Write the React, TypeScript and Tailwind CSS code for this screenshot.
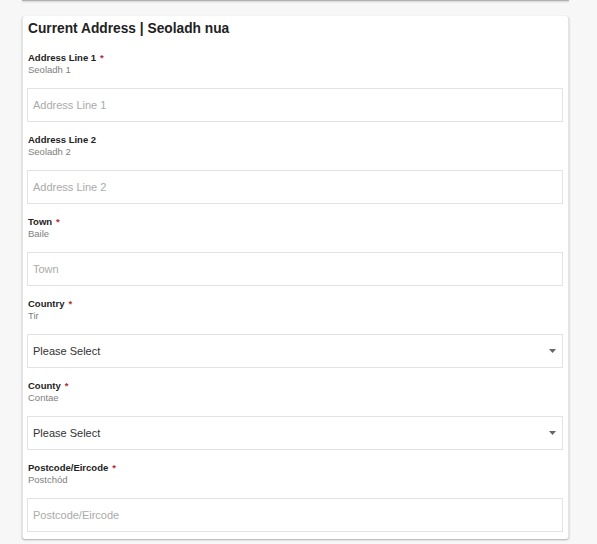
const fields = [
  { label: "Address Line 1", sub: "Seoladh 1", required: true, placeholder: "Address Line 1" },
  { label: "Address Line 2", sub: "Seoladh 2", required: false, placeholder: "Address Line 2" },
  { label: "Town", sub: "Baile", required: true, placeholder: "Town" },
  { label: "Country", sub: "Tir", required: true, select: true },
  { label: "County", sub: "Contae", required: true, select: true },
  { label: "Postcode/Eircode", sub: "Postchód", required: true, placeholder: "Postcode/Eircode" },
];

function Field({ f }: { f: (typeof fields)[number] }) {
  return (
    <div className="pt-[11px]">
      <div className="h-[12px] pl-[1px] text-[9.5px] leading-[12px] font-bold text-[#222]">
        {f.label}
        {f.required && <span className="ml-[4px] text-[#b03030]">*</span>}
      </div>
      <div className="h-[12px] pl-[1px] text-[9.5px] leading-[12px] text-[#808080]">{f.sub}</div>
      <div className="mt-[12px] mb-[1px] h-[34px] border border-[#e2e2e2] bg-white flex items-center pl-[5px] pr-[6px] text-[11px]">
        {f.select ? (
          <>
            <span className="flex-1 text-[#333]">Please Select</span>
            <svg width="7" height="4" viewBox="0 0 7 4">
              <path d="M0 0h7L3.5 4z" fill="#666" />
            </svg>
          </>
        ) : (
          <span className="text-[#aaa]">{f.placeholder}</span>
        )}
      </div>
    </div>
  );
}

export default function App() {
  return (
    <div className="min-h-[544px] bg-[#f7f7f7] font-['Liberation_Sans',Arial,sans-serif]">
      <div className="ml-[22px] w-[547px]">
        <div className="h-[1px] bg-[#b0b0b0] shadow-[0_1px_2px_rgba(0,0,0,0.2)]" />
        <div className="mt-[15px] bg-white rounded-[3px] border-r border-l border-[#e4e4e4] shadow-[0_1px_2px_rgba(0,0,0,0.3)] pl-[4px] pr-[5px] pt-[1px] pb-[6px]">
          <div className="h-[24px] leading-[24px] text-[13.75px] font-bold text-[#222] pl-[1px]">
            Current Address | Seoladh nua
          </div>
          {fields.map((f) => (
            <Field key={f.label} f={f} />
          ))}
        </div>
      </div>
    </div>
  );
}
